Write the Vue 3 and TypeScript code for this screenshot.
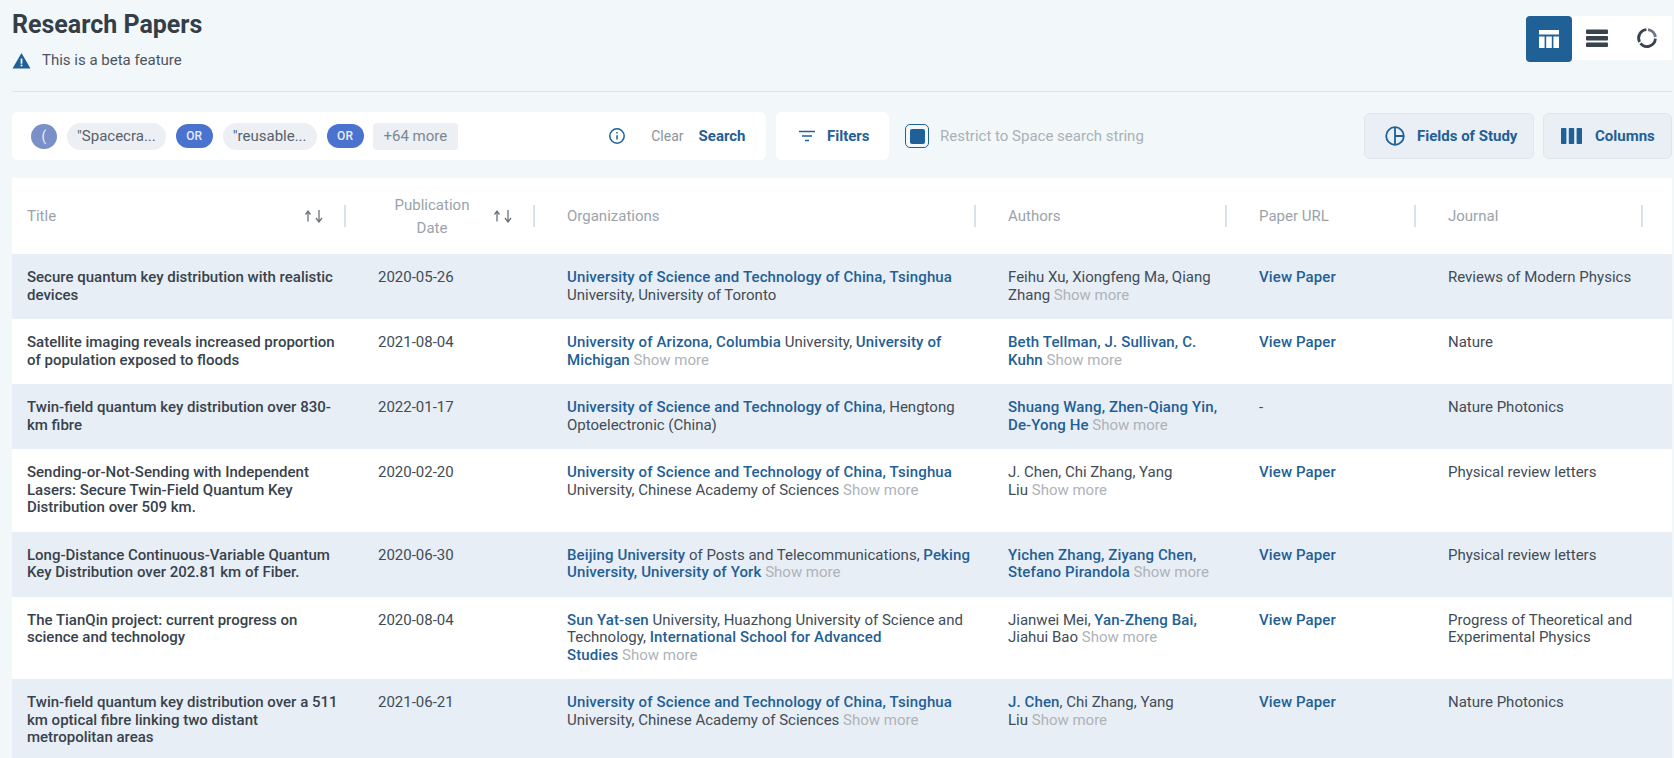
<template>
  <div class="page">
    <div class="top">
      <div>
        <h1 class="title">Research Papers</h1>
        <div class="beta">
          <svg class="betaIcon" viewBox="0 0 20 18" width="19" height="17">
            <path d="M10 1 L19.5 17.5 H0.5 Z" fill="#1f6096" />
            <rect x="9.1" y="7" width="1.8" height="5.4" fill="#fff" />
            <rect x="9.1" y="13.4" width="1.8" height="1.8" fill="#fff" />
          </svg>
          <span>This is a beta feature</span>
        </div>
      </div>
      <div class="views">
        <button class="view active">
          <svg viewBox="0 0 24 24" width="24" height="24" fill="#fff">
            <rect x="2" y="3" width="20" height="4.5" />
            <rect x="2" y="9.5" width="5.6" height="11.5" />
            <rect x="9.2" y="9.5" width="5.6" height="11.5" />
            <rect x="16.4" y="9.5" width="5.6" height="11.5" />
          </svg>
        </button>
        <button class="view">
          <svg viewBox="0 0 24 24" width="24" height="24" fill="#38434d">
            <rect x="1" y="3.5" width="22" height="4.6" rx="1" />
            <rect x="1" y="10" width="22" height="4.6" rx="1" />
            <rect x="1" y="16.5" width="22" height="4.6" rx="1" />
          </svg>
        </button>
        <button class="view">
          <svg viewBox="0 0 24 24" width="24" height="24" fill="none" stroke="#38434d" stroke-width="2.8">
            <path d="M13 3.6 A8.5 8.5 0 0 1 20.4 11" stroke="#6b7680" />
            <path d="M20.4 12.6 A8.5 8.5 0 0 1 5.4 17.4" />
            <path d="M4.6 16 A8.5 8.5 0 0 1 11.4 3.6" />
          </svg>
        </button>
      </div>
    </div>

    <div class="toolbar">
      <div class="search">
        <span class="paren">(</span>
        <span class="chip">"Spacecra...</span>
        <span class="or">OR</span>
        <span class="chip">"reusable...</span>
        <span class="or">OR</span>
        <span class="more">+64 more</span>
        <svg class="info" viewBox="0 0 18 18" width="18" height="18" fill="none" stroke="#1f6096" stroke-width="1.5">
          <circle cx="9" cy="9" r="7.2" />
          <path d="M9 8.2 V12.6" />
          <path d="M9 5 V6.6" />
        </svg>
        <span class="clear">Clear</span>
        <span class="searchBtn">Search</span>
      </div>
      <div class="filters">
        <svg viewBox="0 0 16 12" width="16" height="12" fill="none" stroke="#1f6096" stroke-width="1.5">
          <path d="M0 1.5 H16 M3 6 H13 M6 10.5 H10" />
        </svg>
        <span>Filters</span>
      </div>
      <label class="restrict">
        <span class="check"><span class="checkFill" /></span>
        <span>Restrict to Space search string</span>
      </label>
      <div class="tools">
        <button class="tool study">
          <svg viewBox="0 0 20 20" width="20" height="20" fill="none" stroke="#1f6096" stroke-width="1.8">
            <circle cx="10" cy="10" r="8.8" />
            <path d="M10 1.2 V18.8 M10 10 H18.8" />
          </svg>
          <span>Fields of Study</span>
        </button>
        <button class="tool cols">
          <svg viewBox="0 0 21 16" width="21" height="16" fill="#1f6096">
            <rect x="0" y="0" width="5.4" height="16" rx="0.8" />
            <rect x="7.8" y="0" width="5.4" height="16" rx="0.8" />
            <rect x="15.6" y="0" width="5.4" height="16" rx="0.8" />
          </svg>
          <span>Columns</span>
        </button>
      </div>
    </div>

    <table class="papers">
      <colgroup>
        <col class="cTitle" />
        <col class="cDate" />
        <col class="cOrg" />
        <col class="cAuth" />
        <col class="cUrl" />
        <col class="cJournal" />
      </colgroup>
      <thead>
        <tr>
          <th v-for="h in headers" :key="h.label">
            <div class="th">
              <span class="thLabel" :class="{ center: h.center }">{{ h.label }}</span>
              <svg v-if="h.sort" class="sort" viewBox="0 0 20 14" width="20" height="14" fill="none" stroke="#68737d" stroke-width="1.3">
                <path d="M4 12.5 V3 M1.5 5.5 L4 2 L6.5 5.5" />
                <path d="M15 1 V12 M12 9 L15 13 L18 9" />
              </svg>
              <span class="thDivider" />
            </div>
          </th>
        </tr>
      </thead>
      <tbody>
        <tr v-for="p in papers" :key="p.title">
          <td class="paperTitle">{{ p.title }}</td>
          <td>{{ p.date }}</td>
          <td class="rich">
            <span v-for="(o, i) in p.orgs" :key="i" :class="{ link: o.link }">{{ o.text }}</span>
            <span v-if="p.orgMore" class="showMore"> Show more</span>
          </td>
          <td class="rich">
            <span v-for="(a, i) in p.authors" :key="i" :class="{ link: a.link }">{{ a.text }}</span>
            <span class="showMore" v-if="p.authorMore"> Show more</span>
          </td>
          <td><span :class="{ link: p.url }">{{ p.url ? 'View Paper' : '-' }}</span></td>
          <td>{{ p.journal }}</td>
        </tr>
      </tbody>
    </table>
  </div>
</template>

<script setup lang="ts">
interface Part {
  text: string
  link?: boolean
}

interface Paper {
  title: string
  date: string
  orgs: Part[]
  orgMore: boolean
  authors: Part[]
  authorMore: boolean
  url: boolean
  journal: string
}

const headers = [
  { label: 'Title', sort: true, center: false },
  { label: 'Publication Date', sort: true, center: true },
  { label: 'Organizations', sort: false, center: false },
  { label: 'Authors', sort: false, center: false },
  { label: 'Paper URL', sort: false, center: false },
  { label: 'Journal', sort: false, center: false }
]

const ustc = 'University of Science and Technology of China'

const papers: Paper[] = [
  {
    title: 'Secure quantum key distribution with realistic devices',
    date: '2020-05-26',
    orgs: [{ text: `${ustc}, Tsinghua`, link: true }, { text: ' University, University of Toronto' }],
    orgMore: false,
    authors: [{ text: 'Feihu Xu, Xiongfeng Ma, Qiang Zhang' }],
    authorMore: true,
    url: true,
    journal: 'Reviews of Modern Physics'
  },
  {
    title: 'Satellite imaging reveals increased proportion of population exposed to floods',
    date: '2021-08-04',
    orgs: [
      { text: 'University of Arizona, Columbia', link: true },
      { text: ' University, ' },
      { text: 'University of Michigan', link: true }
    ],
    orgMore: true,
    authors: [{ text: 'Beth Tellman, J. Sullivan, C.\nKuhn', link: true }],
    authorMore: true,
    url: true,
    journal: 'Nature'
  },
  {
    title: 'Twin-field quantum key distribution over 830-km fibre',
    date: '2022-01-17',
    orgs: [{ text: ustc, link: true }, { text: ', Hengtong Optoelectronic (China)' }],
    orgMore: false,
    authors: [{ text: 'Shuang Wang, Zhen-Qiang Yin,\nDe-Yong He', link: true }],
    authorMore: true,
    url: false,
    journal: 'Nature Photonics'
  },
  {
    title: 'Sending-or-Not-Sending with Independent Lasers: Secure Twin-Field Quantum Key Distribution over 509 km.',
    date: '2020-02-20',
    orgs: [{ text: `${ustc}, Tsinghua`, link: true }, { text: ' University, Chinese Academy of Sciences' }],
    orgMore: true,
    authors: [{ text: 'J. Chen, Chi Zhang, Yang\nLiu' }],
    authorMore: true,
    url: true,
    journal: 'Physical review letters'
  },
  {
    title: 'Long-Distance Continuous-Variable Quantum Key Distribution over 202.81 km of Fiber.',
    date: '2020-06-30',
    orgs: [
      { text: 'Beijing University', link: true },
      { text: ' of Posts and Telecommunications, ' },
      { text: 'Peking University, University of York', link: true }
    ],
    orgMore: true,
    authors: [{ text: 'Yichen Zhang, Ziyang Chen, Stefano Pirandola', link: true }],
    authorMore: true,
    url: true,
    journal: 'Physical review letters'
  },
  {
    title: 'The TianQin project: current progress on science and technology',
    date: '2020-08-04',
    orgs: [
      { text: 'Sun Yat-sen', link: true },
      { text: ' University, Huazhong University of Science and Technology, ' },
      { text: 'International School for Advanced\nStudies', link: true }
    ],
    orgMore: true,
    authors: [
      { text: 'Jianwei Mei, ' },
      { text: 'Yan-Zheng Bai,', link: true },
      { text: '\nJiahui Bao' }
    ],
    authorMore: true,
    url: true,
    journal: 'Progress of Theoretical and Experimental Physics'
  },
  {
    title: 'Twin-field quantum key distribution over a 511 km optical fibre linking two distant metropolitan areas',
    date: '2021-06-21',
    orgs: [{ text: `${ustc}, Tsinghua`, link: true }, { text: ' University, Chinese Academy of Sciences' }],
    orgMore: true,
    authors: [{ text: 'J. Chen', link: true }, { text: ', Chi Zhang, Yang\nLiu' }],
    authorMore: true,
    url: true,
    journal: 'Nature Photonics'
  }
]
</script>

<style>
html,
body {
  margin: 0;
  background: #f2f7fa;
}
</style>

<style scoped>
.page {
  height: 100vh;
  overflow: hidden;
  box-sizing: border-box;
  padding: 0 2px 0 12px;
  background: #f2f7fa;
  font-family: Roboto, "Liberation Sans", sans-serif;
  font-size: 15px;
  color: #414c56;
}

.top {
  height: 91px;
  display: flex;
  justify-content: space-between;
  border-bottom: 1px solid #dde3e8;
}

.title {
  margin: 11px 0 0;
  font-size: 25px;
  line-height: 28px;
  font-weight: 700;
  color: #333e48;
}

.beta {
  margin-top: 11px;
  display: flex;
  align-items: center;
  gap: 11px;
  line-height: 20px;
  color: #4a555f;
}

.views {
  margin-top: 16px;
  height: 44px;
  display: flex;
  background: #fff;
}

.view {
  width: 50px;
  height: 44px;
  padding: 0;
  border: none;
  background: transparent;
  display: flex;
  align-items: center;
  justify-content: center;
}

.view.active {
  width: 46px;
  height: 46px;
  border-radius: 4px;
  background: #1f6096;
}

.toolbar {
  margin-top: 20px;
  height: 48px;
  display: flex;
  align-items: center;
}

.search {
  width: 754px;
  height: 48px;
  box-sizing: border-box;
  padding-left: 19px;
  border-radius: 6px;
  background: #fff;
  display: flex;
  align-items: center;
}

.paren {
  width: 26px;
  height: 25px;
  border-radius: 13px;
  background: #7b8fc9;
  color: #e8ecf7;
  font-size: 14px;
  line-height: 25px;
  text-align: center;
}

.chip {
  margin-left: 10px;
  height: 27px;
  padding: 0 10px;
  border-radius: 14px;
  background: #eceff4;
  color: #56616b;
  line-height: 27px;
}

.or {
  margin-left: 10px;
  width: 37px;
  height: 24px;
  border-radius: 12px;
  background: #4a72cf;
  color: #e6edf9;
  font-size: 12px;
  font-weight: 500;
  line-height: 24px;
  text-align: center;
}

.more {
  margin-left: 9px;
  height: 27px;
  padding: 0 11px;
  border-radius: 4px;
  background: #eceff4;
  color: #7d8790;
  line-height: 27px;
}

.info {
  margin-left: 150px;
}

.clear {
  margin-left: 25px;
  font-size: 14px;
  color: #8b949c;
}

.searchBtn {
  margin-left: 15px;
  color: #1f6096;
  font-weight: 700;
}

.filters {
  margin-left: 10px;
  width: 113px;
  height: 48px;
  box-sizing: border-box;
  padding-left: 23px;
  border-radius: 6px;
  background: #fff;
  display: flex;
  align-items: center;
  gap: 12px;
  color: #1f6096;
  font-weight: 700;
}

.restrict {
  margin-left: 16px;
  display: flex;
  align-items: center;
  gap: 11px;
  color: #a9b1b8;
}

.check {
  width: 24px;
  height: 24px;
  box-sizing: border-box;
  border: 1.5px solid #1f6096;
  border-radius: 5px;
  display: flex;
  align-items: center;
  justify-content: center;
}

.checkFill {
  width: 15px;
  height: 15px;
  border-radius: 2px;
  background: #1f6096;
}

.tools {
  margin-left: auto;
  display: flex;
  gap: 9px;
}

.tool {
  height: 46px;
  box-sizing: border-box;
  border: 1px solid #dfe5eb;
  border-radius: 6px;
  background: #e9eff5;
  display: flex;
  align-items: center;
  font-family: inherit;
  font-size: 15px;
  font-weight: 700;
  color: #1f6096;
}

.study {
  width: 170px;
  padding: 0 0 0 20px;
  gap: 12px;
}

.cols {
  width: 129px;
  padding: 0 0 0 17px;
  gap: 13px;
}

.papers {
  margin-top: 18px;
  width: 1660px;
  table-layout: fixed;
  border-collapse: collapse;
  background: #fff;
}

.cTitle { width: 351px; }
.cDate { width: 189px; }
.cOrg { width: 441px; }
.cAuth { width: 251px; }
.cUrl { width: 189px; }
.cJournal { width: 239px; }

th {
  height: 76px;
  padding: 0 15px;
  font-weight: 400;
  text-align: left;
  color: #9aa3ab;
}

th:last-child .thDivider {
  right: 14px;
}

.th {
  position: relative;
  display: flex;
  align-items: center;
  line-height: 23px;
}

.thLabel {
  flex: 1;
}

.thLabel.center {
  margin-top: 1px;
  padding: 0 22px 0 15px;
  text-align: center;
}

.sort {
  margin-right: 24px;
}

.thDivider {
  position: absolute;
  right: 2px;
  top: 50%;
  margin-top: -11px;
  width: 2px;
  height: 22px;
  background: #d7e2ea;
}

td {
  padding: 15px 15px 15px;
  vertical-align: top;
  line-height: 17.5px;
  color: #414c56;
}

tbody tr:nth-child(odd) {
  background: #e8eef5;
}

.paperTitle {
  padding-right: 22px;
  font-weight: 500;
  color: #37424c;
}

.rich {
  white-space: pre-line;
}

.link {
  color: #1f6096;
  font-weight: 500;
  letter-spacing: 0.12px;
}

.showMore {
  color: #aeb3b8;
}
</style>
